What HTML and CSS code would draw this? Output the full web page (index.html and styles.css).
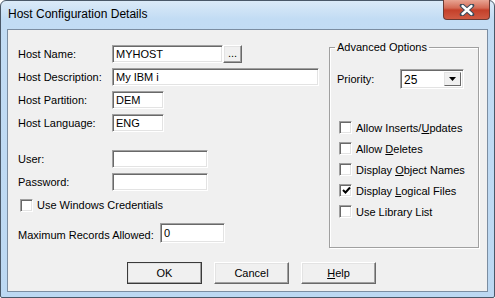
FILE: index.html
```html
<!DOCTYPE html>
<html lang="en">
<head>
  <meta charset="UTF-8" />
  <title>Host Configuration Details</title>
  <link rel="stylesheet" href="styles.css">
</head>
<body>
  <div class="window">
    <div class="titlebar">Host Configuration Details</div>
    <div class="close-btn">
      <svg width="16" height="12" viewBox="0 0 16 12">
        <path d="M3 1.5 L13 10.5 M13 1.5 L3 10.5" stroke="#3c4a5a" stroke-width="4.5" stroke-linecap="round"/>
        <path d="M3.5 2 L12.5 10 M12.5 2 L3.5 10" stroke="#ffffff" stroke-width="2.4" stroke-linecap="round"/>
      </svg>
    </div>

    <div class="client">
      <div class="body">
        <div class="left-col">
          <div class="row">
            <label>Host Name:</label>
            <div class="field w-name">MYHOST</div>
            <div class="btn browse-btn">...</div>
          </div>
          <div class="row">
            <label>Host Description:</label>
            <div class="field w-desc">My IBM i</div>
          </div>
          <div class="row">
            <label>Host Partition:</label>
            <div class="field w-short">DEM</div>
          </div>
          <div class="row">
            <label>Host Language:</label>
            <div class="field w-short">ENG</div>
          </div>

          <div class="row row-gap">
            <label>User:</label>
            <div class="field w-user"></div>
          </div>
          <div class="row">
            <label>Password:</label>
            <div class="field w-user"></div>
          </div>
          <div class="row check-row win-cred">
            <span class="checkbox"></span>
            <span>Use Windows Credentials</span>
          </div>
          <div class="row max-row">
            <label class="max-label">Maximum Records Allowed:</label>
            <div class="field w-max">0</div>
          </div>
        </div>

        <fieldset class="group">
          <legend>Advanced Options</legend>
          <div class="priority-row">
            <label>Priority:</label>
            <div class="combo">
              <span class="combo-value">25</span>
              <span class="combo-arrow">
                <svg width="7" height="4" viewBox="0 0 7 4"><path d="M0 0 H7 L3.5 4 Z" fill="#000"/></svg>
              </span>
            </div>
          </div>
          <div class="options">
            <div class="check-row">
              <span class="checkbox"></span>
              <span>Allow Inserts/<u>U</u>pdates</span>
            </div>
            <div class="check-row">
              <span class="checkbox"></span>
              <span>Allow <u>D</u>eletes</span>
            </div>
            <div class="check-row">
              <span class="checkbox"></span>
              <span>Display <u>O</u>bject Names</span>
            </div>
            <div class="check-row">
              <span class="checkbox">
                <svg width="9" height="9" viewBox="0 0 9 9"><path d="M1 4 L3.5 6.5 L8 1.5" stroke="#000" stroke-width="2" fill="none"/></svg>
              </span>
              <span>Display <u>L</u>ogical Files</span>
            </div>
            <div class="check-row">
              <span class="checkbox"></span>
              <span>Use Library List</span>
            </div>
          </div>
        </fieldset>
      </div>

      <div class="buttons">
        <div class="btn dlg-btn default-btn">OK</div>
        <div class="btn dlg-btn">Cancel</div>
        <div class="btn dlg-btn"><u>H</u>elp</div>
      </div>
    </div>
  </div>
</body>
</html>
```

FILE: styles.css
```css
* {
  box-sizing: border-box;
}

html, body {
  margin: 0;
  padding: 0;
  background: #ffffff;
}

.window {
  position: relative;
  width: 495px;
  height: 298px;
  border: 1px solid #4a5868;
  border-radius: 6px 6px 2px 2px;
  padding: 0 6px 5px 6px;
  background: linear-gradient(to bottom, #dbeaf8 0px, #c2dcf4 18px, #bcd8f2 100%);
}

.titlebar {
  height: 28px;
  padding: 6px 0 0 1px;
  font-family: "Liberation Sans", Arial, sans-serif;
  font-size: 12px;
  color: #000;
}

.close-btn {
  position: absolute;
  top: -1px;
  right: 4px;
  width: 47px;
  height: 20px;
  border: 1px solid #6b3a34;
  border-top: none;
  border-radius: 0 0 4px 4px;
  background: linear-gradient(to bottom, #e8a493 0px, #d46a55 8px, #c4402a 10px, #d05a43 19px);
  display: flex;
  align-items: center;
  justify-content: center;
}

.client {
  height: 263px;
  border: 1px solid #7b8da1;
  background: #f0f0f0;
  font-family: "Liberation Sans", Arial, sans-serif;
  font-size: 11px;
  color: #000;
}

.body {
  display: flex;
  padding-top: 11px;
}

.left-col {
  width: 321px;
  padding: 4px 0 0 10px;
}

.row {
  display: flex;
  align-items: center;
  height: 18px;
  margin-bottom: 5px;
}

.row label {
  width: 94px;
}

.row-gap {
  margin-top: 18px;
}

.field {
  height: 18px;
  padding: 2px 0 0 3px;
  background: #ffffff;
  border-top: 1px solid #a0a0a0;
  border-left: 1px solid #a0a0a0;
  border-right: 1px solid #ffffff;
  border-bottom: 1px solid #ffffff;
  box-shadow: inset 1px 1px 0 #696969, inset -1px -1px 0 #e3e3e3;
  white-space: nowrap;
}

.w-name { width: 111px; }
.w-desc { width: 207px; }
.w-short { width: 52px; }
.w-user { width: 96px; }
.w-max { width: 65px; height: 20px; padding-top: 3px; }

.btn {
  background: #f0f0f0;
  border-top: 1px solid #ffffff;
  border-left: 1px solid #ffffff;
  border-right: 1px solid #696969;
  border-bottom: 1px solid #696969;
  box-shadow: inset -1px -1px 0 #a0a0a0, inset 1px 1px 0 #e3e3e3;
  display: flex;
  align-items: center;
  justify-content: center;
}

.browse-btn {
  width: 19px;
  height: 18px;
  padding-bottom: 2px;
}

.check-row {
  display: flex;
  align-items: center;
  gap: 4px;
}

.win-cred {
  padding-left: 2px;
}

.checkbox {
  width: 13px;
  height: 13px;
  background: #ffffff;
  border-top: 1px solid #a0a0a0;
  border-left: 1px solid #a0a0a0;
  border-right: 1px solid #ffffff;
  border-bottom: 1px solid #ffffff;
  box-shadow: inset 1px 1px 0 #696969, inset -1px -1px 0 #e3e3e3;
  display: flex;
  align-items: center;
  justify-content: center;
  padding-left: 1px;
}

.max-row {
  height: 20px;
  margin-top: 9px;
}

.row .max-label {
  width: 142px;
  padding-top: 3px;
}

.group {
  width: 150px;
  margin: 0;
  padding: 0 6px 5px 5px;
  border: 1px solid #a0a0a0;
  box-shadow: 1px 1px 0 #ffffff, inset 1px 1px 0 #ffffff;
}

.group legend {
  padding: 0 2px;
  line-height: 13px;
}

.priority-row {
  display: flex;
  align-items: center;
  margin-top: 15px;
  padding-left: 2px;
}

.priority-row label {
  width: 63px;
}

.combo {
  width: 64px;
  height: 20px;
  display: flex;
  align-items: stretch;
  background: #ffffff;
  border-top: 1px solid #a0a0a0;
  border-left: 1px solid #a0a0a0;
  border-right: 1px solid #ffffff;
  border-bottom: 1px solid #ffffff;
  box-shadow: inset 1px 1px 0 #696969, inset -1px -1px 0 #e3e3e3;
  padding: 2px 2px 2px 2px;
}

.combo-value {
  flex: 1;
  padding-left: 1px;
  line-height: 16px;
  font-size: 12px;
}

.combo-arrow {
  width: 17px;
  background: #f0f0f0;
  border-top: 1px solid #e3e3e3;
  border-left: 1px solid #e3e3e3;
  border-right: 1px solid #696969;
  border-bottom: 1px solid #696969;
  display: flex;
  align-items: center;
  justify-content: center;
}

.options {
  margin-top: 28px;
  padding-left: 4px;
}

.options .check-row {
  height: 21px;
}

.buttons {
  display: flex;
  gap: 12px;
  padding-left: 119px;
  margin-top: 14px;
}

.dlg-btn {
  width: 75px;
  height: 22px;
}

.default-btn {
  outline: 1px solid #3a3a3a;
  outline-offset: -1px;
  border-right-color: #3a3a3a;
  border-bottom-color: #3a3a3a;
}
```
